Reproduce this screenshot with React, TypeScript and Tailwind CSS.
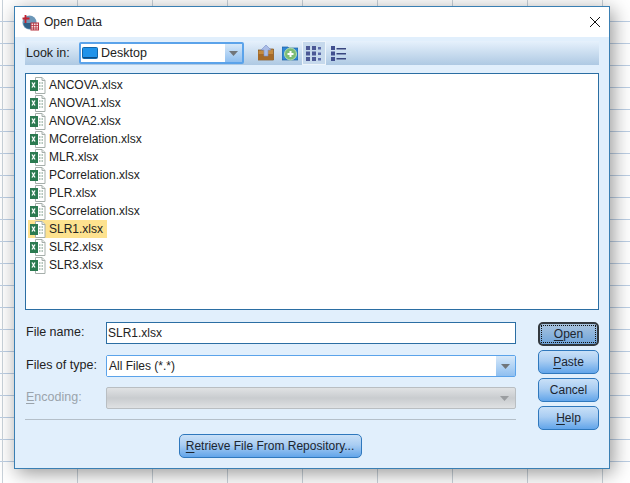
import React from "react";

const files = ["ANCOVA.xlsx","ANOVA1.xlsx","ANOVA2.xlsx","MCorrelation.xlsx","MLR.xlsx","PCorrelation.xlsx","PLR.xlsx","SCorrelation.xlsx","SLR1.xlsx","SLR2.xlsx","SLR3.xlsx"];

function ExcelIcon() {
  return (
    <svg width="17" height="17" viewBox="0 0 17 17" className="shrink-0">
      <path d="M6.500 .5h6.500l3 3v13h-9.500z" fill="#fff" stroke="#a5aeaa" />
      <path d="M13 .5v3h3" fill="#e8ecea" stroke="#a5aeaa" />
      <path d="M10 5h1.500v2H10zM12.500 5H14v2h-1.500zM10 8h1.500v2H10zM12.500 8H14v2h-1.500zM10 11h1.500v2H10zM12.500 11H14v2h-1.500z" fill="#b4c6bc" />
      <rect x="1" y="3" width="8" height="11" fill="#2b7a50" />
      <path d="M3 5.500l3 5M6 5.500l-3 5" stroke="#fff" strokeWidth="1.300" fill="none" />
    </svg>
  );
}

function AppIcon() {
  return (
    <svg width="17" height="17" viewBox="0 0 17 17" className="shrink-0">
      <circle cx="7.500" cy="8.500" r="7" fill="#6c97b8" />
      <path d="M1.500 9a6 6 0 0 0 11 3v-3z" fill="#2f5f86" />
      <path d="M3.500 1v8M0.500 4.500h7" stroke="#c2222f" strokeWidth="1.800" />
      <rect x="9" y="9" width="7.500" height="7" fill="#f4dfe0" stroke="#b5323f" />
      <path d="M9 11.500h7.500M9 14h7.500M11.500 9v7M14 9v7" stroke="#b5323f" strokeWidth=".8" />
    </svg>
  );
}

function Arrow({ color = "#70757a" }: { color?: string }) {
  return (
    <svg width="9" height="5" viewBox="0 0 9 5">
      <path d="M0 0h9L4.500 5z" fill={color} />
    </svg>
  );
}

function Btn({ first, rest, extra }: { first: string; rest: string; extra?: string }) {
  return (
    <button className={"h-6 rounded-[5px] border border-[#2f78bd] bg-[linear-gradient(to_bottom,#c9e0f7_0%,#a9cdf2_45%,#62a5ea_100%)] text-[12px] text-[#1c2530] flex items-center justify-center " + (extra ?? "")}>
      <span className="underline underline-offset-2">{first}</span>
      <span>{rest}</span>
    </button>
  );
}

export default function App() {
  return (
    <div className="w-[630px] h-[483px] overflow-hidden bg-white bg-[linear-gradient(to_right,#c9d2da_1px,transparent_1px),linear-gradient(to_bottom,#bccfe5_1px,transparent_1px)] bg-[size:75px_22px] bg-[position:2px_21px] pt-[6px] pl-[14px] font-['Liberation_Sans',Arial,sans-serif] text-[12px] text-[#222]">
      <div className="w-[596px] h-[463px] border border-[#3a7fb3] bg-[#e1effc] flex flex-col shadow-[3px_4px_18px_rgba(0,0,0,0.42)]">
        <div className="h-[30px] bg-white flex items-center pl-[7px] pr-[8px] gap-[5px] shrink-0">
          <AppIcon />
          <span className="text-[12px] text-[#222]">Open Data</span>
          <svg width="12" height="12" viewBox="0 0 12 12" className="ml-auto">
            <path d="M1 1l10 10M11 1L1 11" stroke="#111" strokeWidth="1" fill="none" />
          </svg>
        </div>

        <div className="flex-1 flex flex-col px-[10px] pt-[4px]">
          <div className="h-6 shrink-0 bg-[linear-gradient(to_bottom,#e6f1fc,#aec9e3)] flex items-center pl-[1px]">
            <span className="w-[53px] text-[12.500px]">Look in:</span>
            <div className="w-[165px] h-[22px] border-2 border-[#5ba3ea] rounded-[2px] flex items-stretch">
              <div className="w-[144px] bg-white flex items-center pl-[1px] gap-[3px]">
                <svg width="16" height="12" viewBox="0 0 16 12" className="shrink-0">
                  <rect x=".5" y=".5" width="15" height="11" rx="1" fill="#1f93ea" stroke="#1266a8" />
                  <path d="M1 10.500h14" stroke="#0b4c86" />
                </svg>
                <span className="text-[12.500px]">Desktop</span>
              </div>
              <div className="flex-1 bg-[linear-gradient(to_bottom,#d6e8f9,#8fbff0)] flex items-center justify-center"><Arrow /></div>
            </div>
            <div className="ml-[14px] w-[16px]">
              <svg width="16" height="16" viewBox="0 0 16 16">
                <path d="M0 5h5l1-1h9.500v11H0z" fill="#c48a3f" stroke="#7a4c17" strokeWidth=".7" />
                <path d="M0 9h15.500v6H0z" fill="#a56a28" />
                <path d="M8 0l5 5h-3v6H6V5H3z" fill="#a9bce6" stroke="#7a8fc8" strokeWidth=".6" />
              </svg>
            </div>
            <div className="ml-[8px] w-[16px]">
              <svg width="16" height="16" viewBox="0 0 16 16">
                <path d="M0 2h6l1 1h9v12H0z" fill="#2f86d6" stroke="#1c5f9f" strokeWidth=".7" />
                <circle cx="8.500" cy="9" r="6" fill="#7dbd74" stroke="#b8dfb2" />
                <path d="M8.500 6v6M5.500 9h6" stroke="#fff" strokeWidth="2" />
              </svg>
            </div>
            <div className="ml-[4px] w-6 h-6 border border-[#eef5fb] bg-[#c6d9ec] flex items-center justify-center">
              <svg width="16" height="15" viewBox="0 0 16 15">
                <path d="M0 0h4v4H0zM6 0h4v4H6zM0 5.500h4v4H0zM6 5.500h4v4H6zM0 11h4v4H0zM6 11h4v4H6z" fill="#4b5895" />
                <path d="M12 1h3v2.500h-3zM12 6.500h3V9h-3zM12 12h3v2.500h-3z" fill="#5b6aa8" />
              </svg>
            </div>
            <div className="ml-[5px] w-[16px]">
              <svg width="15" height="15" viewBox="0 0 15 15">
                <path d="M0 0h4v4H0zM0 5.500h4v4H0zM0 11h4v4H0z" fill="#42508f" />
                <path d="M5.500 2h9.500v1.500H5.500zM5.500 7h9.500v1.500H5.500zM5.500 12h9.500v1.500H5.500z" fill="#39467f" />
              </svg>
            </div>
          </div>

          <div className="mt-2 h-[237px] w-[574px] shrink-0 border border-[#2b6ea3] bg-white pt-[2px] pl-[2px] flex flex-col">
            {files.map((f) => (
              <div key={f} className={"h-[18px] flex items-center w-fit pl-[1px] pr-[4px] gap-[3px] " + (f === "SLR1.xlsx" ? "bg-[#fde28f]" : "")}>
                <ExcelIcon />
                <span className="text-[12px] text-[#222]">{f}</span>
              </div>
            ))}
          </div>

          <div className="mt-3 flex gap-[22px]">
            <div className="w-[491px] flex flex-col">
              <div className="flex items-center h-[22px]">
                <span className="w-[81px] text-[12.500px] pl-[1px] -translate-y-[1px]">File name:</span>
                <div className="flex-1 h-[22px] border border-[#2b6ea3] bg-white flex items-center pl-[1px]">SLR1.xlsx</div>
              </div>
              <div className="flex items-center h-[22px] mt-[11px]">
                <span className="w-[81px] text-[12.500px] pl-[1px] -translate-y-[1px]">Files of type:</span>
                <div className="flex-1 h-[22px] border border-[#5ba3ea] rounded-[2px] flex items-stretch">
                  <div className="flex-1 bg-white flex items-center pl-[2px]"><span>All Files (*.*)</span></div>
                  <div className="w-[19px] bg-[linear-gradient(to_bottom,#d6e8f9,#8fbff0)] flex items-center justify-center"><Arrow /></div>
                </div>
              </div>
              <div className="flex items-center h-[22px] mt-[10px]">
                <span className="w-[81px] text-[12.500px] pl-[1px] text-[#9aa3ab] -translate-y-[1px]"><span className="underline underline-offset-2">E</span>ncoding:</span>
                <div className="flex-1 h-[22px] border border-[#b9bec2] rounded-[2px] bg-[linear-gradient(to_bottom,#e0e2e4,#c9cccf_50%,#dfe1e3)] flex items-center justify-end pr-[6px]"><Arrow color="#9a9da0" /></div>
              </div>
              <div className="mt-[10px] h-px bg-[#b4bfc9]" />
              <div className="mt-[14px] flex justify-center pr-[1px]">
                <Btn first="R" rest="etrieve File From Repository..." extra="w-[183px] text-[12.100px]" />
              </div>
            </div>
            <div className="w-[61px] flex flex-col gap-1">
              <button className="h-6 rounded-[5px] border-2 border-[#33393f] bg-[linear-gradient(to_bottom,#a9c4df,#6fa4da)] p-[1px] text-[12px] text-[#1c2530]">
                <span className="w-full h-full border border-dotted border-[#111] flex items-center justify-center">
                  <span className="underline underline-offset-2">O</span>pen
                </span>
              </button>
              <Btn first="P" rest="aste" />
              <button className="h-6 rounded-[5px] border border-[#2f78bd] bg-[linear-gradient(to_bottom,#c9e0f7_0%,#a9cdf2_45%,#62a5ea_100%)] text-[12px] text-[#1c2530]">Cancel</button>
              <Btn first="H" rest="elp" />
            </div>
          </div>
        </div>
      </div>
    </div>
  );
}
